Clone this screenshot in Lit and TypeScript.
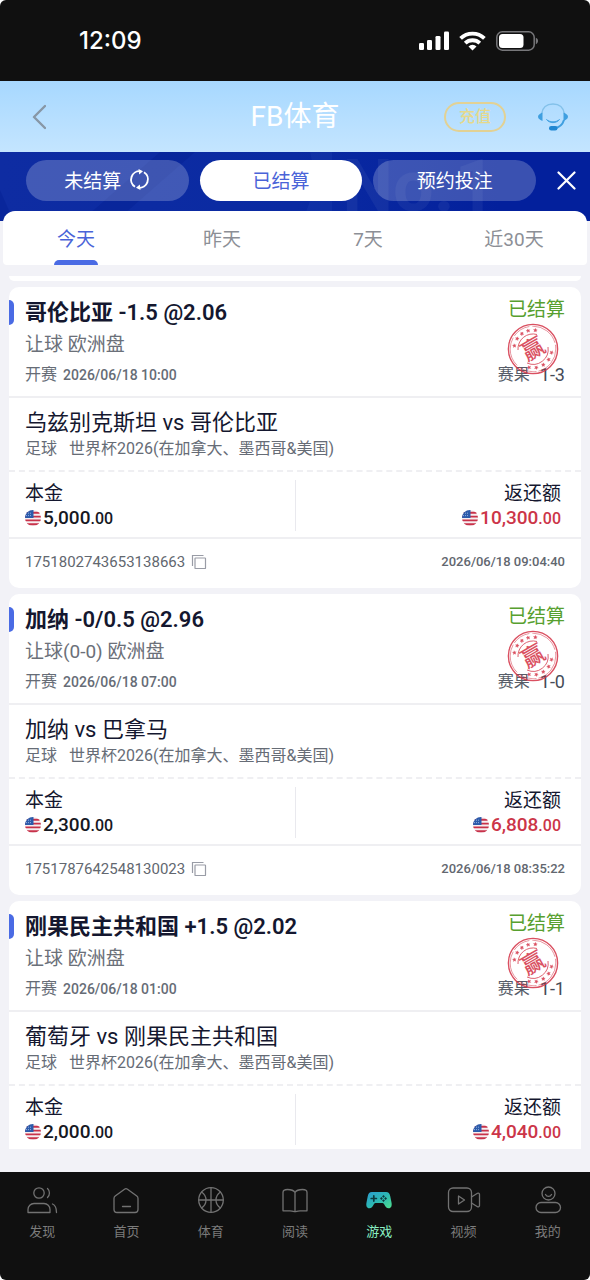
import { LitElement, html, svg, css } from "lit";
import { customElement, property, state } from "lit/decorators.js";
import { classMap } from "lit/directives/class-map.js";

interface Bet {
  pick: string;
  market: string;
  kickoff: string;
  score: string;
  match: string;
  stake: string;
  payout: string;
  id?: string;
  settledAt?: string;
}

const BETS: Bet[] = [
  {
    pick: "哥伦比亚 -1.5 @2.06",
    market: "让球 欧洲盘",
    kickoff: "2026/06/18 10:00",
    score: "1-3",
    match: "乌兹别克斯坦 vs 哥伦比亚",
    stake: "5,000",
    payout: "10,300",
    id: "1751802743653138663",
    settledAt: "2026/06/18 09:04:40",
  },
  {
    pick: "加纳 -0/0.5 @2.96",
    market: "让球(0-0) 欧洲盘",
    kickoff: "2026/06/18 07:00",
    score: "1-0",
    match: "加纳 vs 巴拿马",
    stake: "2,300",
    payout: "6,808",
    id: "1751787642548130023",
    settledAt: "2026/06/18 08:35:22",
  },
  {
    pick: "刚果民主共和国 +1.5 @2.02",
    market: "让球 欧洲盘",
    kickoff: "2026/06/18 01:00",
    score: "1-1",
    match: "葡萄牙 vs 刚果民主共和国",
    stake: "2,000",
    payout: "4,040",
  },
];

const flag = html`<svg class="flag" viewBox="0 0 16 16" width="16" height="16" aria-hidden="true">
  <defs><clipPath id="disc"><circle cx="8" cy="8" r="8" /></clipPath></defs>
  <g clip-path="url(#disc)">
    <rect width="16" height="16" fill="#f6eef0" />
    <path d="M0 2.800h16M0 6.600h16M0 10.400h16M0 14.200h16" stroke="#c8324a" stroke-width="1.900" />
    <rect width="8.500" height="8" fill="#2c5bab" />
    <path d="M1 3.200h6M1 5.600h6" stroke="#a9c3ea" stroke-width=".8" stroke-dasharray="1 1" />
  </g>
</svg>`;

const STARS = [-80, -57, -36, -15, 7, 101, 124, 147, 170, 192];

@customElement("win-stamp")
export class WinStamp extends LitElement {
  static styles = css`
    :host { display: block; width: 52px; height: 52px; opacity: 0.85; }
    svg { display: block; }
    .word { font: 500 23px "Noto Sans CJK SC", sans-serif; fill: #d43246; }
  `;

  render() {
    return html`<svg viewBox="0 0 52 52" width="52" height="52" role="img" aria-label="赢">
      <g fill="none" stroke="#d43246">
        <circle cx="26" cy="26" r="24.6" stroke-width="1.4" />
        <circle cx="26" cy="26" r="22.8" stroke-width=".6" stroke-dasharray="30 2 18 3" />
        <path d="M11 27A15 15 0 0 1 30 11.500" stroke-width=".9" />
        <path d="M41 24A15 15 0 0 1 20 40" stroke-width=".9" />
      </g>
      ${STARS.map(
        (a) => svg`<path d="M26 5.200l.6 1.200 1.300.1-1 .9.3 1.300-1.200-.7-1.200.7.3-1.300-1-.9 1.300-.1z"
          fill="#d43246" stroke="#d43246" stroke-width=".3" transform="rotate(${a} 26 26)" />`,
      )}
      <text class="word" x="26" y="34" text-anchor="middle" transform="rotate(-30 26 26)">赢</text>
    </svg>`;
  }
}

@customElement("bet-card")
export class BetCard extends LitElement {
  @property({ attribute: false }) bet!: Bet;

  static styles = css`
    :host { display: block; background: #fff; border-radius: 10px; color: #14172f; }
    h2, h3, p { margin: 0; font-weight: 400; }
    .head {
      display: grid; grid-template-columns: 1fr auto; row-gap: 2px;
      position: relative; padding: 11px 16px 7px; border-bottom: 2px solid #efeff2;
      align-items: start;
    }
    .head::before {
      content: ""; position: absolute; left: 0; top: 13px; width: 5px; height: 25px;
      background: #4a6be4; border-radius: 0 5px 5px 0;
    }
    .pick { font-size: 22px; line-height: 30px; font-weight: 600; }
    .status { font-size: 19px; line-height: 24px; color: #57a02f; text-align: right; }
    .market { font-size: 19px; line-height: 29px; color: #6b7079; grid-column: 1 / -1; }
    .small { font-size: 16px; line-height: 28px; color: #666c76; display: flex; align-items: center; gap: 6px; }
    .small time { font-size: 14px; font-weight: 500; }
    .result { gap: 10px; color: #565c68; }
    .result b { font-size: 18px; font-weight: 400; color: #464c58; }
    win-stamp { position: absolute; right: 22px; top: 36px; }
    .match { padding: 11px 16px 9px; border-bottom: 2px dashed #efeff2; }
    .match h3 { font-size: 22px; line-height: 28px; }
    .match p { font-size: 16px; line-height: 24px; color: #666c76; display: flex; gap: 12px; }
    .money { display: grid; grid-template-columns: 1fr 1fr; padding: 8px 16px 6px; border-bottom: 2px solid #efeff2; }
    .money div { padding: 1px 0; }
    .money div:last-child {
      border-left: 1px solid #e9e9ee; padding-right: 4px;
      display: flex; flex-direction: column; align-items: flex-end;
    }
    .label { font-size: 19px; line-height: 25px; }
    .amount { display: flex; align-items: center; gap: 2px; line-height: 23px; font-weight: 500; font-size: 19px; color: #16181f; }
    .amount small { font-size: 16px; }
    .flag { display: block; }
    .red { color: #cc3548; }
    .foot { display: flex; align-items: center; justify-content: space-between; padding: 9px 16px 12px; line-height: 28px; color: #62676f; }
    .id { display: flex; align-items: center; gap: 6px; font-size: 15px; }
    .foot time { font-size: 13px; font-weight: 500; }
    button { border: 0; padding: 0; background: none; display: block; }
    button svg { display: block; }
  `;

  render() {
    const b = this.bet;
    return html`
      <div class="head">
        <h2 class="pick">${b.pick}</h2>
        <span class="status">已结算</span>
        <p class="market">${b.market}</p>
        <p class="small">开赛 <time>${b.kickoff}</time></p>
        <p class="small result">赛果 <b>${b.score}</b></p>
        <win-stamp></win-stamp>
      </div>
      <div class="match">
        <h3>${b.match}</h3>
        <p><span>足球</span><span>世界杯2026(在加拿大、墨西哥&美国)</span></p>
      </div>
      <div class="money">
        <div>
          <p class="label">本金</p>
          <p class="amount">${flag}<span>${b.stake}<small>.00</small></span></p>
        </div>
        <div>
          <p class="label">返还额</p>
          <p class="amount red">${flag}<span>${b.payout}<small>.00</small></span></p>
        </div>
      </div>
      ${b.id
        ? html`<div class="foot">
            <span class="id">${b.id}
              <button aria-label="复制">
                <svg width="16" height="16" viewBox="0 0 16 16" fill="none" stroke="#999ca6" stroke-width="1.200">
                  <rect x="4" y="4" width="10.500" height="10.500" rx=".6" /><path d="M1.500 12V1.500h11" />
                </svg>
              </button>
            </span>
            <time>${b.settledAt}</time>
          </div>`
        : html`<div class="foot"></div>`}
    `;
  }
}

const NAV = [
  {
    label: "发现",
    icon: svg`<circle cx="14" cy="9" r="5.200"/><path d="M22.500 4.500c2.600 2.400 2.600 6.400 0 9M3 28.500v-3a6 6 0 0 1 6-6h10a6 6 0 0 1 6 6v3zM27.500 20c3 1.200 4 3.500 4 8.500"/>`,
  },
  {
    label: "首页",
    icon: svg`<path d="M5 14.500a3 3 0 0 1 1.200-2.400l9.300-6.900a2.500 2.500 0 0 1 3 0l9.300 6.900a3 3 0 0 1 1.200 2.400v11a3 3 0 0 1-3 3H8a3 3 0 0 1-3-3zM13.500 22.500h8"/>`,
  },
  {
    label: "体育",
    icon: svg`<circle cx="17" cy="16" r="12.300"/><path d="M17 3.700v24.600M4.700 16h24.600M7.500 8c6 4 6 12 0 16M26.500 8c-6 4-6 12 0 16"/>`,
  },
  {
    label: "阅读",
    icon: svg`<path d="M17 8.500C15.500 6 13 5.500 9.500 5.500 6.500 5.500 5 6.500 5 8.500v18.300h7c2 0 3.500.5 5 .9 1.500-.4 3-.9 5-.9h7V8.500c0-2-1.500-3-4.500-3-3.500 0-6 .5-7.500 3zM17 8.500v19"/>`,
  },
  {
    label: "游戏",
    icon: svg`<defs><linearGradient id="pad" x1="0" y1="0" x2="1" y2="1"><stop offset="0" stop-color="#2b9bd0"/><stop offset=".5" stop-color="#2cb8b4"/><stop offset="1" stop-color="#50e08e"/></linearGradient></defs>
      <path stroke="none" fill="url(#pad)" d="M10 8h14c2.600 0 3.600 1.500 4.200 4l1.300 6.500c.7 3.400-.4 5.800-2.800 5.800-2.300 0-3.300-1.500-4.400-3.700-.6-1.200-1.400-1.600-2.600-1.600h-5.400c-1.200 0-2 .4-2.600 1.600-1.100 2.200-2.100 3.700-4.400 3.700-2.400 0-3.500-2.400-2.800-5.800L5.800 12C6.400 9.500 7.400 8 10 8z"/>
      <path stroke="#0d3a40" stroke-width="1.700" d="M9.200 14.500h5.200M11.800 11.900v5.200"/>
      <path stroke="none" fill="#0d3a40" d="M21.500 11l1.400 1.400-1.400 1.400-1.400-1.400zM21.500 15.200l1.400 1.400-1.400 1.400-1.400-1.400zM19.400 13.100l1.400 1.400-1.400 1.400-1.400-1.400zM23.600 13.100l1.400 1.400-1.400 1.400-1.400-1.400z"/>`,
  },
  {
    label: "视频",
    icon: svg`<rect x="1.500" y="4" width="23" height="23.500" rx="4.500"/><path d="M24.500 13l6-3.700a1.300 1.300 0 0 1 2 1.100v11.200a1.300 1.300 0 0 1-2 1.100l-6-3.700M11.500 12v8l6-4z"/>`,
  },
  {
    label: "我的",
    icon: svg`<circle cx="17.500" cy="9.500" r="6.500"/><path d="M14.500 10.500c1.300 2.500 4.700 2.500 6 0"/><rect x="5" y="18.500" width="24.500" height="10" rx="5"/>`,
  },
];

@customElement("app-root")
export class AppRoot extends LitElement {
  @state() private day = 0;
  @state() private section = 4;

  static styles = css`
    :host {
      display: flex; flex-direction: column; height: 100vh; overflow: hidden;
      font-family: Roboto, "Noto Sans CJK SC", sans-serif;
      background: linear-gradient(#fff 40px, #f2f2f7 40px calc(100% - 40px), #fff 0);
    }
    * { box-sizing: border-box; }
    button { font: inherit; color: inherit; border: 0; padding: 0; background: none; }
    svg { display: block; }
    .statusbar {
      display: flex; align-items: center; justify-content: space-between; flex: none;
      height: 81px; padding: 0 52px 0 79px; background: #101010; color: #fff; border-radius: 6px 6px 0 0;
    }
    .clock { font: 500 24px/30px Inter, sans-serif; }
    .signals { display: flex; align-items: center; gap: 10px; }
    .topbar {
      display: grid; grid-template-columns: 1fr auto 1fr; align-items: center; flex: none;
      height: 71px; padding: 1px 22px 0; background: linear-gradient(#a7d8ff, #c4e5ff);
    }
    .back { justify-self: start; padding-left: 10px; }
    h1 { margin: 0; font-size: 28px; line-height: 40px; font-weight: 400; color: #fff; }
    .actions { display: flex; align-items: center; justify-content: flex-end; gap: 32px; }
    .recharge {
      width: 62px; height: 30px; border: 2px solid #e2d194; border-radius: 15px;
      font-size: 16px; line-height: 24px; color: #e5d98c; font-weight: 500;
    }
    .banner {
      position: relative; overflow: hidden; flex: none; display: flex; align-items: center; gap: 11px;
      padding: 8px 11px 20px 26px; color: #fff;
      background: linear-gradient(90deg, #0e2ca2, #0a2aa2 50%, #03209c 85%);
    }
    .slogan {
      position: absolute; left: 58%; top: 0; font: 700 72px/69px Roboto, sans-serif;
      color: rgba(255, 255, 255, 0.05);
    }
    .beam { position: absolute; left: 0; top: 0; }
    .pill {
      position: relative; flex: 1; height: 41px; border-radius: 21px; background: rgba(255, 255, 255, 0.22);
      display: flex; align-items: center; justify-content: center; gap: 8px; font-size: 19px; padding-bottom: 2px;
    }
    .pill.on { background: #fff; color: #4a63d8; }
    .close { position: relative; margin-left: 7px; padding: 3px; }
    .days {
      flex: none; display: grid; grid-template-columns: repeat(4, 1fr); margin: -10px 3px 0;
      position: relative; background: #fff; border-radius: 12px 12px 4px 4px;
    }
    .day { position: relative; height: 54px; font-size: 19px; color: #8c8f96; padding-bottom: 2px; }
    .day.on { color: #4a63d8; }
    .day.on::after {
      content: ""; position: absolute; left: 50%; bottom: 0; width: 44px; height: 5px; margin-left: -22px;
      background: #4a6be4; border-radius: 5px 5px 0 0;
    }
    main { flex: 1; min-height: 0; display: flex; padding: 11px 9px 23px; }
    .list { flex: 1; overflow: hidden; display: flex; flex-direction: column; gap: 6px; }
    .list > * { flex: none; }
    .tail { height: 5px; background: #fff; border-radius: 0 0 10px 10px; }
    nav {
      flex: none; display: grid; grid-template-columns: repeat(7, 1fr); height: 108px; padding-top: 12px;
      background: #101010; border-radius: 0 0 6px 6px;
    }
    .item {
      display: flex; flex-direction: column; align-items: center; gap: 6px; align-self: start;
      font-size: 13px; line-height: 20px; color: #7c7c7c;
    }
    .item.on { color: #8af0c4; }
    .item svg { fill: none; stroke: #727272; stroke-width: 1.3; stroke-linejoin: round; stroke-linecap: round; }
  `;

  render() {
    return html`
      <div class="statusbar">
        <span class="clock">12:09</span>
        <div class="signals">
          <svg width="30" height="20" viewBox="0 0 30 20" fill="#fff">
            <rect x="0" y="12" width="5" height="7" rx="1.300" /><rect x="8" y="9" width="5" height="10" rx="1.300" />
            <rect x="16.500" y="5" width="5" height="14" rx="1.300" /><rect x="25" y="0.500" width="5" height="18.500" rx="1.300" />
          </svg>
          <svg width="27" height="20" viewBox="0 0 27 20" fill="none" stroke="#fff" stroke-width="3.800">
            <path d="M1.600 7.400a17 17 0 0 1 23.800 0" /><path d="M6.200 12.200a10.500 10.500 0 0 1 14.600 0" />
            <path d="M13.500 19.500l-4-4a5.600 5.600 0 0 1 8 0z" fill="#fff" stroke="none" />
          </svg>
          <svg width="42" height="20" viewBox="0 0 42 20">
            <rect x=".8" y=".8" width="37.400" height="18.400" rx="5.500" fill="none" stroke="#77777a" stroke-width="1.500" />
            <rect x="3" y="3" width="24.500" height="14" rx="3.500" fill="#fff" />
            <path d="M39.800 6.800c3 1.200 3 5.200 0 6.400z" fill="#77777a" />
          </svg>
        </div>
      </div>

      <header class="topbar">
        <button class="back" aria-label="返回">
          <svg width="14" height="26" viewBox="0 0 14 26" fill="none" stroke="#8797a6" stroke-width="2.400" stroke-linecap="round" stroke-linejoin="round">
            <path d="M13 2L2 13l11 11" />
          </svg>
        </button>
        <h1>FB体育</h1>
        <div class="actions">
          <button class="recharge">充值</button>
          <button aria-label="客服">
            <svg width="30" height="28" viewBox="0 0 30 28" fill="none">
              <path d="M3.500 11C4.500 4.500 9 1 15 1s10.500 3.500 11.500 10" stroke="#83c1ea" stroke-width="1.300" />
              <path d="M4.500 9.500v8.500C2.500 16.800 0 15.800 0 13.700s2.500-3 4.500-4.200z" fill="#3f9fe0" />
              <path d="M25.500 9.500v8.500c2-1.200 4.500-2.200 4.500-4.300s-2.500-3-4.500-4.200z" fill="#3f9fe0" />
              <path d="M26 17c-1.500 4.800-4.500 7.300-9 8" stroke="#3f9fe0" stroke-width="2" />
              <path d="M8.500 16.500c3 4.200 10 4.200 13 0-3.400 3-9.600 3-13 0z" fill="#3f9fe0" stroke="#3f9fe0" stroke-width=".8" />
              <rect x="11" y="23" width="8.500" height="4.500" rx="2.250" fill="#1f87d2" />
            </svg>
          </button>
        </div>
      </header>

      <div class="banner">
        <svg class="beam" width="340" height="70" viewBox="0 0 340 70" aria-hidden="true">
          <path d="M160 0h35L115 70H80zM0 38l14 32H0z" fill="#001a8c" opacity=".3" />
          <path d="M310 0h22v70h-32c14-20 16-45 10-70z" fill="#4360c8" opacity=".12" />
        </svg>
        <span class="slogan" aria-hidden="true">No.1</span>
        <button class="pill">
          未结算
          <svg width="21" height="21" viewBox="0 0 21 21" fill="none" stroke="#fff" stroke-width="1.900">
            <path d="M6 17.800A8.500 8.500 0 0 1 11.500 2.200M15 3.200a8.500 8.500 0 0 1-5.500 15.600" />
            <path d="M9.500 0l4.500 2.200-3.800 3.200zM11.500 21L7 18.800l3.800-3.200z" fill="#fff" stroke="none" />
          </svg>
        </button>
        <button class="pill on">已结算</button>
        <button class="pill">预约投注</button>
        <button class="close" aria-label="关闭">
          <svg width="19" height="19" viewBox="0 0 19 19" stroke="#fff" stroke-width="2.200" stroke-linecap="round">
            <path d="M1.500 1.500l16 16M17.500 1.500l-16 16" />
          </svg>
        </button>
      </div>

      <div class="days">
        ${["今天", "昨天", "7天", "近30天"].map(
          (d, i) => html`<button class=${classMap({ day: true, on: i === this.day })} @click=${() => (this.day = i)}>${d}</button>`,
        )}
      </div>

      <main>
        <div class="list">
          <div class="tail"></div>
          ${BETS.map((b) => html`<bet-card .bet=${b}></bet-card>`)}
        </div>
      </main>

      <nav>
        ${NAV.map(
          (n, i) => html`<button class=${classMap({ item: true, on: i === this.section })} @click=${() => (this.section = i)}>
            <svg width="34" height="32" viewBox="0 0 34 32">${n.icon}</svg>${n.label}
          </button>`,
        )}
      </nav>
    `;
  }
}
